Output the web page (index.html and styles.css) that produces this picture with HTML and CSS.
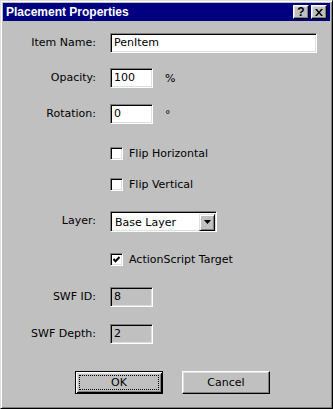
FILE: index.html
```html
<!DOCTYPE html>
<html lang="en">
<head>
    <meta charset="UTF-8">
    <title>Placement Properties</title>
    <link rel="stylesheet" href="styles.css">
</head>
<body>
    <div class="window">
        <div class="titlebar">
            <span class="title">Placement Properties</span>
            <div class="tbtns">
                <div class="tbtn">?</div>
                <div class="tbtn">
                    <svg width="8" height="7" viewBox="0 0 8 7"><path d="M0 0h2l2 2.5L6 0h2L5 3.5 8 7H6L4 4.5 2 7H0l3-3.5z"/></svg>
                </div>
            </div>
        </div>

        <div class="form">
            <div class="lbl">Item Name:</div>
            <div class="edit wide">PenItem</div>

            <div class="lbl">Opacity:</div>
            <div class="unit-row"><div class="edit small">100</div><span>%</span></div>

            <div class="lbl">Rotation:</div>
            <div class="unit-row"><div class="edit small">0</div><span>°</span></div>

            <div class="check col2"><div class="box"></div>Flip Horizontal</div>

            <div class="check col2"><div class="box"></div>Flip Vertical</div>

            <div class="lbl">Layer:</div>
            <div class="select">
                <span>Base Layer</span>
                <div class="dd-btn"><svg width="7" height="4" viewBox="0 0 7 4"><path d="M0 0h7L3.5 4z"/></svg></div>
            </div>

            <div class="check col2">
                <div class="box"><svg width="7" height="7" viewBox="0 0 7 7"><polyline points="0.5,3 2.5,5.2 6.5,1" fill="none" stroke="#000" stroke-width="2"/></svg></div>
                ActionScript Target
            </div>

            <div class="lbl">SWF ID:</div>
            <div class="edit small disabled">8</div>

            <div class="lbl">SWF Depth:</div>
            <div class="edit small disabled">2</div>
        </div>

        <div class="actions">
            <div class="btn default"><span class="focus">OK</span></div>
            <div class="btn">Cancel</div>
        </div>
    </div>
</body>
</html>
```

FILE: styles.css
```css
*{margin:0;padding:0;box-sizing:border-box;}
body{background:#c0c0c0;font-family:"DejaVu Sans",sans-serif;font-size:11px;color:#000;}

/* window frame */
.window{width:333px;height:409px;padding:2px;background:#c0c0c0;border:1px solid;border-color:#dfdfdf #000 #000 #dfdfdf;box-shadow:inset 1px 1px #fff,inset -1px -1px #808080;}
.titlebar{height:18px;background:#000080;display:flex;align-items:center;justify-content:space-between;padding:0 3px 0 3px;}
.title{color:#fff;font:bold 12px "Liberation Sans",Arial,sans-serif;}
.tbtns{display:flex;gap:2px;}
.tbtn{width:16px;height:14px;background:#c0c0c0;border:1px solid;border-color:#fff #000 #000 #fff;box-shadow:inset -1px -1px #808080,inset 1px 1px #dfdfdf;display:flex;align-items:center;justify-content:center;font:bold 12px "Liberation Sans",Arial,sans-serif;}

/* form grid */
.form{display:grid;grid-template-columns:93px auto;column-gap:14px;grid-template-rows:35px 36px 39px 31px 37px 38px 38px 37px 20px;padding-top:12px;align-items:start;justify-items:start;}
.lbl{justify-self:end;line-height:20px;}
.col2{grid-column:2;}

.edit{height:20px;background:#fff;border:1px solid;border-color:#808080 #fff #fff #808080;box-shadow:inset 1px 1px #000,inset -1px -1px #dfdfdf;padding:0 3px;line-height:18px;}
.edit.wide{width:207px;}
.edit.small{width:43px;}
.edit.disabled{background:#c0c0c0;}
.unit-row{display:flex;align-items:center;gap:12px;}

.check{display:flex;align-items:center;gap:6px;height:20px;}
.box{width:13px;height:13px;background:#fff;border:1px solid;border-color:#808080 #fff #fff #808080;box-shadow:inset 1px 1px #000,inset -1px -1px #dfdfdf;display:flex;align-items:center;justify-content:center;}

.select{width:107px;height:21px;background:#fff;border:1px solid;border-color:#808080 #fff #fff #808080;box-shadow:inset 1px 1px #000,inset -1px -1px #dfdfdf;display:flex;align-items:center;justify-content:space-between;padding:2px 1px 1px 4px;}
.dd-btn{width:16px;height:17px;background:#c0c0c0;border:1px solid;border-color:#dfdfdf #000 #000 #dfdfdf;box-shadow:inset 1px 1px #fff,inset -1px -1px #808080;display:flex;align-items:center;justify-content:center;}

/* buttons */
.actions{display:flex;gap:19px;margin:27px 0 0 72px;}
.btn{width:88px;height:23px;background:#c0c0c0;border:1px solid;border-color:#fff #000 #000 #fff;box-shadow:inset -1px -1px #808080,inset 1px 1px #dfdfdf;display:flex;align-items:center;justify-content:center;padding:3px;}
.btn.default{border-color:#000;box-shadow:inset 1px 1px #fff,inset -1px -1px #000,inset 2px 2px #dfdfdf,inset -2px -2px #808080;}
.focus{width:100%;height:100%;border:1px dotted #000;display:flex;align-items:center;justify-content:center;}
```
